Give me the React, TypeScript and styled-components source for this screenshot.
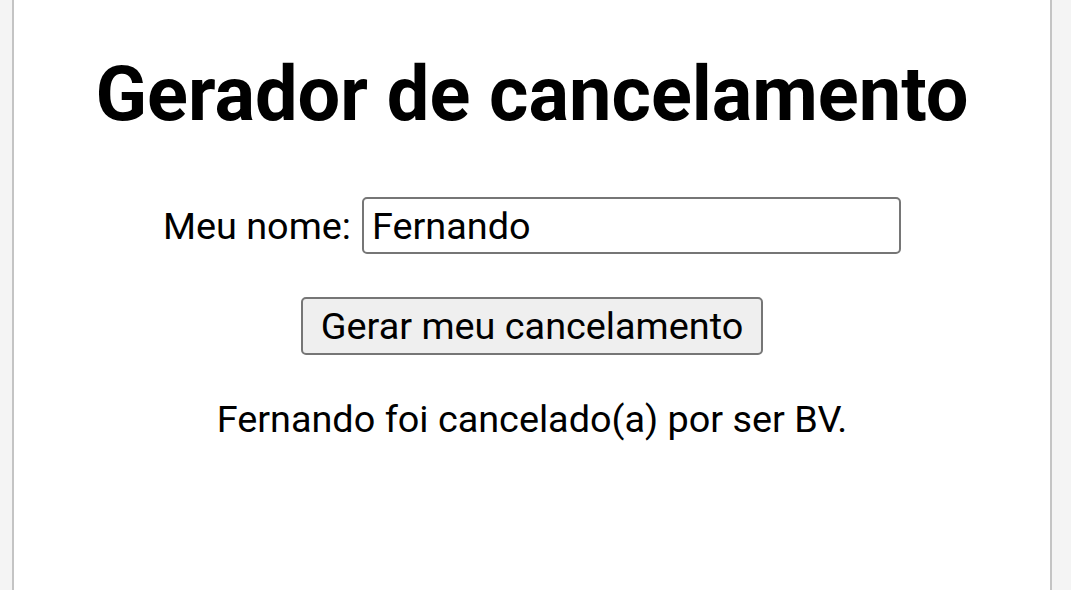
import React, { useState } from "react";
import styled, { createGlobalStyle } from "styled-components";

const GlobalStyle = createGlobalStyle`
  html, body {
    margin: 0;
    padding: 0;
    background: #f4f4f4;
    font-family: Roboto, "Liberation Sans", sans-serif;
  }
`;

const Page = styled.div`
  height: 590px;
  overflow: hidden;
  padding: 0 19px 0 12px;
  background: #f4f4f4;
`;

const Card = styled.main`
  height: 100%;
  box-sizing: border-box;
  background: #fff;
  border-left: 2px solid #c4c4c4;
  border-right: 2px solid #c4c4c4;
  display: flex;
  flex-direction: column;
  align-items: center;
  padding-top: 49px;
  color: #000;
`;

const Title = styled.h1`
  margin: 0;
  font-size: 75.7px;
  font-weight: 700;
  line-height: 90px;
`;

const Row = styled.label`
  display: flex;
  align-items: center;
  gap: 11px;
  margin-top: 58px;
  font-size: 37.8px;
`;

const NameInput = styled.input`
  width: 539px;
  height: 57px;
  box-sizing: border-box;
  border: 2px solid #767676;
  border-radius: 5px;
  padding: 0 8px;
  font-family: inherit;
  font-size: 37.8px;
  color: #000;
  outline: none;
`;

const Button = styled.button`
  margin-top: 43px;
  height: 58px;
  box-sizing: border-box;
  padding: 0 18px;
  background: #efefef;
  border: 2px solid #767676;
  border-radius: 5px;
  font-family: inherit;
  font-size: 37.8px;
  color: #000;
`;

const Result = styled.p`
  margin: 42px 0 0;
  font-size: 37.8px;
  line-height: 44px;
`;

export default function App() {
  const [name, setName] = useState("Fernando");
  const [result, setResult] = useState("Fernando");
  return (
    <>
      <GlobalStyle />
      <Page>
        <Card>
          <Title>Gerador de cancelamento</Title>
          <Row>
            Meu nome:
            <NameInput value={name} onChange={(e) => setName(e.target.value)} />
          </Row>
          <Button onClick={() => setResult(name)}>Gerar meu cancelamento</Button>
          <Result>{result} foi cancelado(a) por ser BV.</Result>
        </Card>
      </Page>
    </>
  );
}
